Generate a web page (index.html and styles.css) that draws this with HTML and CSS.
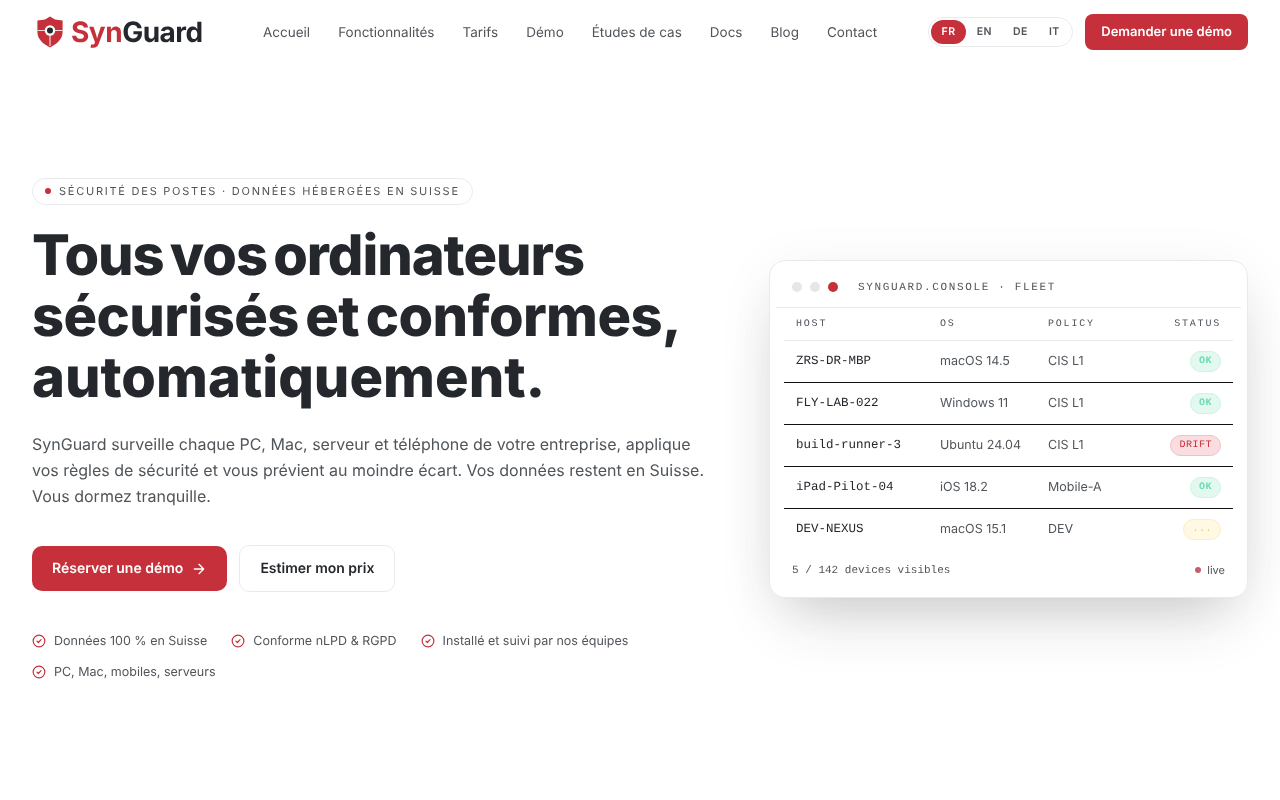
FILE: index.html
```html
<!DOCTYPE html>
<html lang="fr">
<head>
<meta charset="utf-8">
<title>SynGuard</title>
<link rel="stylesheet" href="styles.css">
</head>
<body>
<header class="header">
  <a class="logo" href="#">
    <svg class="logo-mark" width="28" height="32" viewBox="0 0 28 32">
      <path d="M14 0.5 L19 3.6 L26.6 4.6 V16 C26.6 23 21 28 14 31.5 C7 28 1.4 23 1.4 16 V4.6 L9 3.6 Z" fill="#c5303a"/>
      <path d="M1.5 14.5 H26.5 M14 15 V30" stroke="#f3d5d8" stroke-width="1.2" fill="none"/>
      <circle cx="14" cy="14.5" r="5.2" fill="#fff"/>
      <circle cx="14" cy="14.5" r="3" fill="#24282c"/>
    </svg>
    <span class="logo-text"><span class="logo-red">Syn</span>Guard</span>
  </a>
  <nav class="nav">
    <a href="#">Accueil</a>
    <a href="#">Fonctionnalités</a>
    <a href="#">Tarifs</a>
    <a href="#">Démo</a>
    <a href="#">Études de cas</a>
    <a href="#">Docs</a>
    <a href="#">Blog</a>
    <a href="#">Contact</a>
  </nav>
  <div class="header-right">
    <div class="lang">
      <span class="lang-item lang-active">FR</span>
      <span class="lang-item">EN</span>
      <span class="lang-item">DE</span>
      <span class="lang-item">IT</span>
    </div>
    <a class="btn-head" href="#">Demander une démo</a>
  </div>
</header>
<main class="hero">
  <section class="hero-left">
    <div class="pill"><span class="pill-dot"></span>SÉCURITÉ DES POSTES · DONNÉES HÉBERGÉES EN SUISSE</div>
    <h1 class="title"><span class="line line-1">Tous vos ordinateurs</span> <span class="line line-2">sécurisés et conformes,</span> <span class="line line-3">automatiquement.</span></h1>
    <p class="lead">SynGuard surveille chaque PC, Mac, serveur et téléphone de votre entreprise, applique vos règles de sécurité et vous prévient au moindre écart. Vos données restent en Suisse. Vous dormez tranquille.</p>
    <div class="actions">
      <a class="btn btn-primary" href="#">Réserver une démo
        <svg width="16" height="16" viewBox="0 0 24 24" fill="none" stroke="currentColor" stroke-width="2" stroke-linecap="round" stroke-linejoin="round"><path d="M5 12h14M12 5l7 7-7 7"/></svg>
      </a>
      <a class="btn btn-secondary" href="#">Estimer mon prix</a>
    </div>
    <ul class="checks">
      <li><svg class="check" viewBox="0 0 24 24"><circle cx="12" cy="12" r="10"/><path d="M8.5 12.2l2.4 2.4 4.6-4.8"/></svg>Données 100 % en Suisse</li>
      <li><svg class="check" viewBox="0 0 24 24"><circle cx="12" cy="12" r="10"/><path d="M8.5 12.2l2.4 2.4 4.6-4.8"/></svg>Conforme nLPD &amp; RGPD</li>
      <li><svg class="check" viewBox="0 0 24 24"><circle cx="12" cy="12" r="10"/><path d="M8.5 12.2l2.4 2.4 4.6-4.8"/></svg>Installé et suivi par nos équipes</li>
      <li><svg class="check" viewBox="0 0 24 24"><circle cx="12" cy="12" r="10"/><path d="M8.5 12.2l2.4 2.4 4.6-4.8"/></svg>PC, Mac, mobiles, serveurs</li>
    </ul>
  </section>
  <aside class="console">
    <div class="console-bar">
      <span class="win-dot"></span><span class="win-dot"></span><span class="win-dot win-red"></span>
      <span class="console-title">SYNGUARD.CONSOLE · FLEET</span>
    </div>
    <div class="console-body">
      <table class="fleet">
        <thead>
          <tr><th class="c1">HOST</th><th class="c2">OS</th><th class="c3">POLICY</th><th class="c4">STATUS</th></tr>
        </thead>
        <tbody>
          <tr><td class="host">ZRS-DR-MBP</td><td>macOS 14.5</td><td>CIS L1</td><td class="st"><span class="badge ok">OK</span></td></tr>
          <tr><td class="host">FLY-LAB-022</td><td>Windows 11</td><td>CIS L1</td><td class="st"><span class="badge ok">OK</span></td></tr>
          <tr><td class="host">build-runner-3</td><td>Ubuntu 24.04</td><td>CIS L1</td><td class="st"><span class="badge drift">DRIFT</span></td></tr>
          <tr><td class="host">iPad-Pilot-04</td><td>iOS 18.2</td><td>Mobile-A</td><td class="st"><span class="badge ok">OK</span></td></tr>
          <tr class="last"><td class="host">DEV-NEXUS</td><td>macOS 15.1</td><td>DEV</td><td class="st"><span class="badge wait">...</span></td></tr>
        </tbody>
      </table>
      <div class="console-foot">
        <span class="foot-count">5 / 142 devices visibles</span>
        <span class="foot-live"><span class="live-dot"></span>live</span>
      </div>
    </div>
  </aside>
</main>
</body>
</html>
```
FILE: styles.css
```css
* { box-sizing: border-box; }
html, body { margin: 0; padding: 0; }
body {
  background: #fff;
  color: #24282c;
  font-family: "Inter", "Liberation Sans", sans-serif;
  text-rendering: geometricPrecision;
  height: 800px;
  overflow: hidden;
}
a { color: inherit; text-decoration: none; }

.header {
  height: 64px;
  padding: 0 32px;
  display: flex;
  align-items: center;
  will-change: transform;
}
.logo {
  display: flex;
  align-items: center;
  gap: 7px;
  width: 231px;
  padding-left: 4px;
}
.logo-mark { flex: none; }
.logo-text {
  font-size: 28px;
  font-weight: 700;
  letter-spacing: -0.5px;
  color: #24282c;
}
.logo-red { color: #c5303a; }
.nav {
  display: flex;
  gap: 28px;
  padding-top: 1px;
  font-size: 13.5px;
  color: #50555a;
}
.header-right {
  margin-left: auto;
  display: flex;
  align-items: center;
  gap: 12px;
}
.lang {
  display: flex;
  align-items: center;
  height: 30px;
  padding: 2px;
  border: 1px solid #e8eaec;
  border-radius: 15px;
}
.lang-item {
  height: 24px;
  line-height: 24px;
  padding: 0 10.5px;
  border-radius: 12px;
  text-align: center;
  font-size: 10.5px;
  font-weight: 600;
  letter-spacing: 0.5px;
  color: #50555a;
}
.lang-active { background: #c5303a; color: #fff; }
.btn-head {
  height: 36px;
  line-height: 36px;
  padding: 0 16px;
  border-radius: 8px;
  background: #c5303a;
  color: #fff;
  font-size: 13px;
  font-weight: 600;
}

.hero {
  padding: 58px 32px 0;
  height: 672px;
  display: flex;
  align-items: center;
  justify-content: space-between;
}
.hero-left { width: 688px; margin-top: -1px; will-change: transform; }
.pill {
  display: inline-flex;
  align-items: center;
  gap: 8px;
  height: 27px;
  padding: 0 12px 1px;
  border: 1px solid #e8eaec;
  border-radius: 14px;
  font-size: 11px;
  font-weight: 400;
  letter-spacing: 1.76px;
  color: #50555a;
}
.pill-dot {
  width: 6px;
  height: 6px;
  border-radius: 50%;
  background: #c5303a;
}
.title {
  margin: 20px 0 0;
  font-size: 56px;
  line-height: 61px;
  font-weight: 800;
  word-spacing: -5px;
  color: #24282c;
}
.line { display: block; }
.line-1 { letter-spacing: -1.05px; }
.line-2 { letter-spacing: -0.6px; }
.line-3 { letter-spacing: 0; }
.lead {
  margin: 23px 0 0;
  font-size: 16px;
  line-height: 26px;
  color: #50555a;
}
.actions {
  margin-top: 36px;
  display: flex;
  gap: 12px;
  align-items: center;
}
.btn {
  display: inline-flex;
  align-items: center;
  gap: 8px;
  border-radius: 10px;
  font-size: 14px;
  font-weight: 600;
}
.btn-primary {
  height: 45px;
  padding: 0 20px;
  background: #c5303a;
  color: #fff;
}
.btn-secondary {
  height: 47px;
  padding: 0 20px;
  border: 1px solid #e8eaec;
  color: #24282c;
}
.checks {
  list-style: none;
  margin: 42px 0 0;
  padding: 0;
  display: flex;
  flex-wrap: wrap;
  gap: 16px 24px;
  font-size: 12.5px;
  line-height: 15px;
  color: #50555a;
}
.checks li { display: flex; align-items: center; gap: 8px; }
.check {
  width: 14px;
  height: 14px;
  margin-top: -1px;
  fill: none;
  stroke: #c5303a;
  stroke-width: 2;
  stroke-linecap: round;
  stroke-linejoin: round;
}

.console {
  width: 479px;
  height: 338px;
  padding: 6px;
  background: #fff;
  border: 1px solid #e8eaec;
  border-radius: 16px;
  box-shadow: 0 30px 60px -20px rgba(36, 40, 44, 0.24), 0 10px 60px rgba(36, 40, 44, 0.06);
  will-change: transform;
}
.console-bar {
  height: 41px;
  padding: 0 16px;
  display: flex;
  align-items: center;
  gap: 8px;
  border-bottom: 1px solid #e8eaec;
}
.win-dot {
  width: 10px;
  height: 10px;
  border-radius: 50%;
  background: #e5e6e8;
}
.win-red { background: #c5303a; }
.console-title {
  margin-left: 12px;
  padding-top: 1px;
  font-family: "Liberation Mono", monospace;
  font-size: 11px;
  letter-spacing: 1.65px;
  color: #50555a;
}
.console-body { padding: 0 8px; }
.fleet {
  width: 449px;
  border-collapse: collapse;
  table-layout: fixed;
  font-size: 12.5px;
  color: #50555a;
}
.fleet th {
  height: 32px;
  padding: 1px 12px 0;
  text-align: left;
  font-family: "Liberation Mono", monospace;
  font-size: 10px;
  font-weight: 400;
  letter-spacing: 1.8px;
  border-bottom: 1px solid #e8eaec;
}
.fleet .c1 { width: 144px; }
.fleet .c2 { width: 108px; }
.fleet .c3 { width: 96px; }
.fleet .c4 { text-align: right; }
.fleet td {
  height: 42px;
  padding: 0 12px;
  border-bottom: 1px solid #111;
}
.fleet .last td { border-bottom: 0; }
.fleet .host {
  font-family: "Liberation Mono", monospace;
  font-size: 12.5px;
  color: #24282c;
}
.fleet .st { text-align: right; }
.badge {
  display: inline-block;
  height: 21px;
  line-height: 20px;
  padding: 0 8px;
  border-radius: 11px;
  border: 1px solid;
  font-family: "Liberation Mono", monospace;
  font-size: 10px;
  letter-spacing: 0.5px;
  vertical-align: middle;
}
.ok { background: #e3f9f0; border-color: #ccf3e3; color: #6fdcb2; font-weight: 700; }
.drift { background: #f9dde0; border-color: #efc0c6; color: #c5303a; }
.wait { background: #fff8e3; border-color: #fbeec4; color: #e9c85f; }
.console-foot {
  display: flex;
  justify-content: space-between;
  align-items: center;
  padding: 13px 8px 0;
}
.foot-count {
  padding-top: 1px;
  font-family: "Liberation Mono", monospace;
  font-size: 11px;
  color: #50555a;
}
.foot-live {
  display: flex;
  align-items: center;
  gap: 6px;
  font-size: 11px;
  color: #50555a;
}
.live-dot {
  width: 6px;
  height: 6px;
  border-radius: 50%;
  background: #c5606b;
}
```
